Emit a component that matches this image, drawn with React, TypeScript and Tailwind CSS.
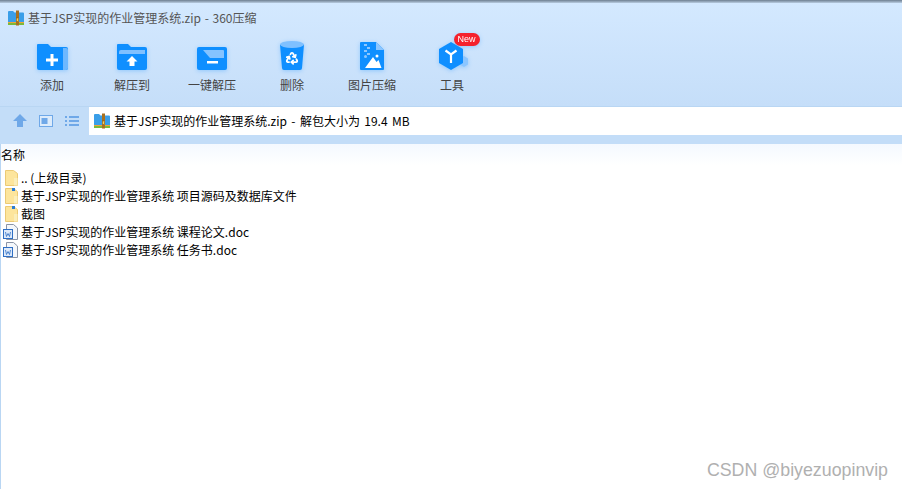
import type { ReactNode } from 'react'
import { Recycle } from 'lucide-react'

const font = "font-['Noto_Sans_CJK_SC','Liberation_Sans',sans-serif]"

function ZipIcon({ className }: { className: string }) {
  return (
    <svg viewBox="0 0 16 16" className={className}>
      <path d="M0 2a1 1 0 0 1 1-1h4l1.500 1.500H15a1 1 0 0 1 1 1V12H0z" fill="#3a9ee8" />
      <rect x="0" y="12" width="16" height="3" fill="#7cb93a" />
      <rect x="0" y="12" width="16" height="1" fill="#f0a53a" />
      <rect x="8" y="0.500" width="3" height="15" fill="#a8701f" />
      <rect x="8.300" y="8" width="2.400" height="3.500" fill="#f5d060" stroke="#7d4f12" strokeWidth="0.500" />
    </svg>
  )
}

function AddIcon() {
  return (
    <svg viewBox="0 0 31 26" className="w-[31px] h-[26px]">
      <path d="M1 0h10l3 3h15a2 2 0 0 1 2 2v19a2 2 0 0 1-2 2H2a2 2 0 0 1-2-2V1a1 1 0 0 1 1-1z" fill="#0f8fff" />
      <path d="M26 4h3a2 2 0 0 1 2 2v18a2 2 0 0 1-2 2h-3z" fill="#6db8ff" />
      <path d="M13.500 10h3v4.500H21v3h-4.500V22h-3v-4.500H9v-3h4.500z" fill="#fff" />
    </svg>
  )
}

function ExtractIcon() {
  return (
    <svg viewBox="0 0 30 26" className="w-[30px] h-[26px]">
      <path d="M1 0h10l3 3h14a2 2 0 0 1 2 2v19a2 2 0 0 1-2 2H2a2 2 0 0 1-2-2V1a1 1 0 0 1 1-1z" fill="#0f8fff" />
      <path d="M2 8a2 2 0 0 1 2-2h24v4H2z" fill="#7fc0ff" />
      <path d="M15 12l5.500 5.500h-3V22h-5v-4.500h-3z" fill="#fff" />
    </svg>
  )
}

function QuickIcon() {
  return (
    <svg viewBox="0 0 30 23" className="w-[30px] h-[23px]">
      <rect width="30" height="23" rx="2" fill="#0f8fff" />
      <path d="M6 3h20a1 1 0 0 1 1 1v7H13z" fill="#85c3ff" />
      <rect x="10" y="14" width="11" height="2.500" fill="#fff" />
    </svg>
  )
}

function TrashIcon() {
  return (
    <svg viewBox="0 0 24 29" className="w-6 h-[29px]">
      <path d="M0 3.500h24l-2 23.500a2 2 0 0 1-2 2H4a2 2 0 0 1-2-2z" fill="#0f8fff" />
      <ellipse cx="12" cy="3.500" rx="12" ry="3.500" fill="#7fc0ff" />
      <Recycle x="5" y="10" width="14" height="14" color="#fff" strokeWidth={3} />
    </svg>
  )
}

function PictureIcon() {
  return (
    <svg viewBox="0 0 24 28" className="w-6 h-7">
      <path d="M1 0h15l8 8v19a1 1 0 0 1-1 1H1a1 1 0 0 1-1-1V1a1 1 0 0 1 1-1z" fill="#0f8fff" />
      <path d="M16 0l8 8h-8z" fill="#8cc6ff" />
      <path d="M4 2h3v2H4zM7 5h3v2H7zM4 8h3v2H4zM7 11h3v2H7z" fill="#8cc6ff" />
      <circle cx="5.500" cy="14.500" r="1.500" fill="#8cc6ff" />
      <path d="M5 26l8-11 3.500 5 2-2 3 8z" fill="#fff" />
      <circle cx="17" cy="14" r="1.500" fill="#fff" />
    </svg>
  )
}

function ToolsIcon() {
  return (
    <div className="relative w-[30px] h-7 ml-[3px]">
      <svg viewBox="0 0 30 28" className="w-[30px] h-7">
        <path d="M25 14l4 2.500v6L25 25l-4-2.500v-6z" fill="#8cc6ff" />
        <path d="M12 0l12 7v14l-12 7-12-7V7z" fill="#0f8fff" />
        <path d="M6.500 8.500l5.500 4 5.500-4M12 12.500V21" fill="none" stroke="#fff" strokeWidth="2.200" />
      </svg>
      <span className="absolute left-[15px] -top-[9px] w-[26px] h-[13px] rounded-full bg-[#f5222d] text-white text-[9px] leading-[13px] text-center font-['Liberation_Sans',sans-serif]">
        New
      </span>
    </div>
  )
}

function FolderIcon({ mark }: { mark?: boolean }) {
  return (
    <svg viewBox="0 0 13 16" className="w-[13px] h-4 ml-[2px]">
      <path d="M0.500 0.500h8l4 3v12h-12z" fill="#fde59c" stroke="#ecca74" />
      <path d="M9 8h3.500v7.500H9z" fill="#fbeeba" />
      {mark && <rect x="7" y="0" width="3" height="3" fill="#2b7cd3" />}
    </svg>
  )
}

function DocIcon() {
  return (
    <svg viewBox="0 0 15 16" className="w-[15px] h-4">
      <path d="M3.500 0.500h7l4 3.500v11.500h-11z" fill="#f4f7fb" stroke="#8a94a6" />
      <rect x="0.500" y="5.500" width="9" height="9" fill="#dce9fa" stroke="#2f6fc4" />
      <path d="M2.500 8l1 4.500 1.500-3 1.500 3 1-4.500" fill="none" stroke="#2f6fc4" strokeWidth="0.800" />
    </svg>
  )
}

function ToolButton({ icon, label }: { icon: ReactNode; label: string }) {
  return (
    <div className="w-20 flex flex-col items-center">
      <div className="h-[30px] flex items-end justify-center drop-shadow-[0_1px_2px_rgba(15,143,255,0.3)]">{icon}</div>
      <div className="mt-[6px] text-xs leading-[18px] text-[#444]">{label}</div>
    </div>
  )
}

function Row({ icon, name }: { icon: ReactNode; name: string }) {
  return (
    <div className="h-[18px] flex items-center text-xs text-black whitespace-nowrap">
      <div className="w-[18px] shrink-0">{icon}</div>
      <span>{name}</span>
    </div>
  )
}

export default function App() {
  return (
    <div className={`relative h-[489px] w-[902px] overflow-hidden bg-white ${font}`}>
      {/* title + toolbar */}
      <div className="h-[107px] border-b border-[#b9d6f3] bg-gradient-to-b from-[#d4e9ff] to-[#c5def9]">
        <div className="h-[3px] bg-gradient-to-b from-[#6e7f90] to-[#b9cde2]" />
        <div className="h-[29px] flex items-center gap-[4px] pl-2 text-xs text-[#555] [word-spacing:1px]">
          <ZipIcon className="w-4 h-4" />
          <span>基于JSP实现的作业管理系统.zip - 360压缩</span>
        </div>
        <div className="flex pl-3 pt-2">
          <ToolButton icon={<AddIcon />} label="添加" />
          <ToolButton icon={<ExtractIcon />} label="解压到" />
          <ToolButton icon={<QuickIcon />} label="一键解压" />
          <ToolButton icon={<TrashIcon />} label="删除" />
          <ToolButton icon={<PictureIcon />} label="图片压缩" />
          <ToolButton icon={<ToolsIcon />} label="工具" />
        </div>
      </div>

      {/* path bar */}
      <div className="h-[37px] bg-[#c3ddf8] flex items-start">
        <div className="w-[89px] h-[28px] flex items-center pl-[13px] gap-3">
          <svg viewBox="0 0 14 14" className="w-3.5 h-3.5">
            <path d="M7 0l7 7h-4v6H4V7H0z" fill="#6fa8e8" />
          </svg>
          <svg viewBox="0 0 14 12" className="w-3.5 h-3">
            <rect x="0.500" y="0.500" width="13" height="11" fill="#dcebfb" stroke="#6fa8e8" />
            <rect x="2.500" y="3" width="6" height="6" fill="#6fa8e8" />
          </svg>
          <svg viewBox="0 0 14 12" className="w-3.5 h-3">
            <path d="M0 1h2v2H0zM4 1h10v2H4zM0 5h2v2H0zM4 5h10v2H4zM0 9h2v2H0zM4 9h10v2H4z" fill="#6fa8e8" />
          </svg>
        </div>
        <div className="flex-1 h-[28px] bg-white flex items-center pl-[5px] gap-[4px] text-xs text-black [word-spacing:1.7px]">
          <ZipIcon className="w-4 h-4" />
          <span>基于JSP实现的作业管理系统.zip - 解包大小为 19.4 MB</span>
        </div>
      </div>

      {/* file list */}
      <div className="h-[345px] border-l border-[#b9d6f3]">
        <div className="h-[21px] bg-gradient-to-b from-[#f4f9ff] to-white pt-[2px] text-xs leading-[18px] text-black">
          名称
        </div>
        <div className="pt-1 pl-[2px]">
          <Row icon={<FolderIcon />} name=".. (上级目录)" />
          <Row icon={<FolderIcon mark />} name="基于JSP实现的作业管理系统 项目源码及数据库文件" />
          <Row icon={<FolderIcon mark />} name="截图" />
          <Row icon={<DocIcon />} name="基于JSP实现的作业管理系统 课程论文.doc" />
          <Row icon={<DocIcon />} name="基于JSP实现的作业管理系统 任务书.doc" />
        </div>
      </div>

      <div className="absolute right-[14px] bottom-[9px] text-[17.8px] leading-5 text-[#b0b0b0] font-['Liberation_Sans',sans-serif]">
        CSDN @biyezuopinvip
      </div>
    </div>
  )
}
